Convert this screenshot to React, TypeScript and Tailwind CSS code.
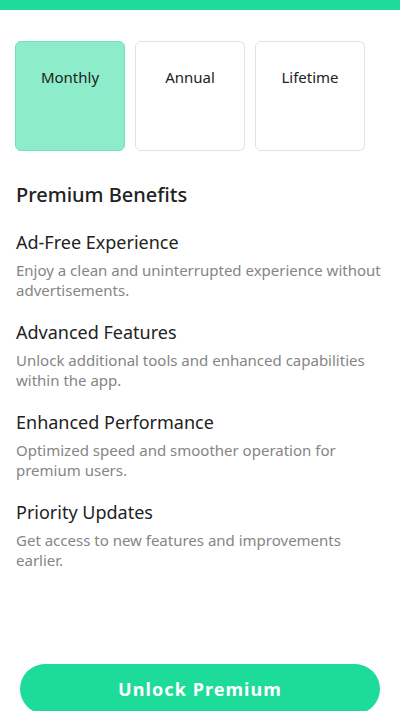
const plans = ['Monthly', 'Annual', 'Lifetime'];

const benefits = [
  {
    title: 'Ad-Free Experience',
    text: 'Enjoy a clean and uninterrupted experience without advertisements.',
  },
  {
    title: 'Advanced Features',
    text: 'Unlock additional tools and enhanced capabilities within the app.',
  },
  {
    title: 'Enhanced Performance',
    text: 'Optimized speed and smoother operation for premium users.',
  },
  {
    title: 'Priority Updates',
    text: 'Get access to new features and improvements earlier.',
  },
];

export default function App() {
  const selected = 'Monthly';

  return (
    <div className="w-[400px] h-[711px] overflow-hidden bg-white font-['Noto_Sans',sans-serif] text-[#222]">
      <div className="h-[10px] bg-[#1ddb99]" />

      <div className="flex gap-[10px] px-[15px] mt-[31px]">
        {plans.map((p) => (
          <div
            key={p}
            className={`w-[110px] h-[110px] rounded-[6px] border flex justify-center pt-[23px] text-[15px] leading-[24px] ${
              p === selected ? 'bg-[#8decca] border-[#6fe2b9]' : 'bg-white border-[#e2e2e2]'
            }`}
          >
            {p}
          </div>
        ))}
      </div>

      <div className="px-4 mt-[30px]">
        <h2 className="text-[20px] leading-[28px] font-medium">Premium Benefits</h2>
        <div className="mt-[21px] flex flex-col gap-[20px]">
          {benefits.map((b) => (
            <div key={b.title}>
              <h3 className="text-[18px] leading-[24px]">{b.title}</h3>
              <p className="mt-[6px] text-[15px] leading-[20px] text-[#858585]">{b.text}</p>
            </div>
          ))}
        </div>
      </div>

      <div className="px-5 mt-[94px]">
        <button className="w-full h-[50px] rounded-full bg-[#1ddb99] text-white text-[18px] font-bold tracking-[0.06em]">
          Unlock Premium
        </button>
      </div>
    </div>
  );
}
